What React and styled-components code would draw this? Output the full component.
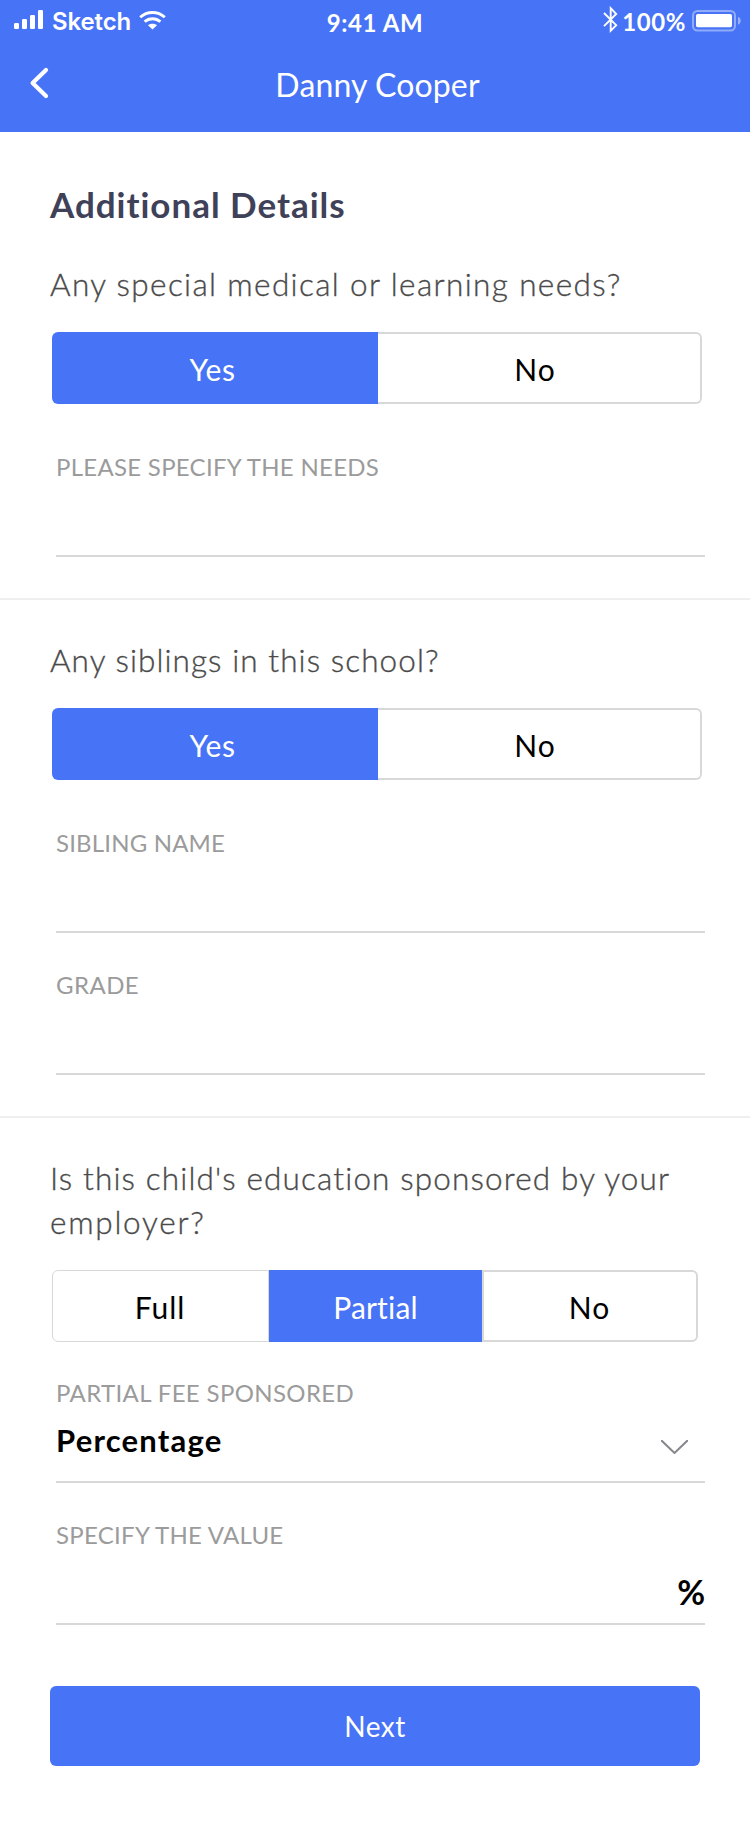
import React, { useState } from 'react';
import styled, { createGlobalStyle, ThemeProvider } from 'styled-components';

const theme = {
  blue: '#4773f7',
  heading: '#3f4159',
  question: '#4a4a4a',
  label: '#9b9b9b',
  line: '#d8d8d8',
  divider: '#efefef',
};

const GlobalStyle = createGlobalStyle`
  * { box-sizing: border-box; }
  body {
    margin: 0;
    background: #fff;
    font-family: Lato, "Open Sans", sans-serif;
    -webkit-font-smoothing: antialiased;
  }
`;

const Screen = styled.div`
  width: 750px;
  min-height: 1824px;
  display: flex;
  flex-direction: column;
  background: #fff;
`;

/* Header */
const Header = styled.header`
  height: 132px;
  background: ${({ theme }) => theme.blue};
  color: #fff;
`;

const StatusBar = styled.div`
  height: 40px;
  display: grid;
  grid-template-columns: 1fr auto 1fr;
`;

const StatusSide = styled.div`
  display: flex;
  align-items: flex-start;
  justify-content: ${({ $end }) => ($end ? 'flex-end' : 'flex-start')};
  padding: ${({ $end }) => ($end ? '0 9px 0 0' : '0 0 0 14px')};
`;

const StatusText = styled.span`
  font-size: 24px;
  line-height: 40px;
  font-weight: 700;
  letter-spacing: 0.6px;
  white-space: nowrap;
  margin-top: 3px;
`;

const Carrier = styled(StatusText)`
  font-family: Inter, sans-serif;
  font-weight: 600;
  letter-spacing: -0.13px;
  margin: 2px 8px 0 8px;
`;

const BatteryLevel = styled(StatusText)`
  letter-spacing: 0.6px;
  margin: 2px 6px 0 4px;
`;

const SignalIcon = styled.svg`
  width: 30px;
  height: 20px;
  margin-top: 10px;
`;

const WifiIcon = styled.svg`
  width: 27px;
  height: 19px;
  margin-top: 10.5px;
`;

const BluetoothIcon = styled.svg`
  width: 15px;
  height: 28px;
  margin-top: 6px;
`;

const BatteryIcon = styled.svg`
  width: 49px;
  height: 22px;
  margin-top: 10px;
`;

const NavBar = styled.div`
  height: 92px;
  display: grid;
  grid-template-columns: 1fr auto 1fr;
  align-items: start;
`;

const BackButton = styled.button`
  justify-self: start;
  border: 0;
  background: none;
  padding: 27px 0 0 28.5px;
  line-height: 0;
  color: inherit;
`;

const NavTitle = styled.h1`
  margin: 0;
  padding-left: 5px;
  font-size: 32px;
  line-height: 89px;
  font-weight: 400;
  letter-spacing: 0.12px;
`;

/* Form */
const Section = styled.section`
  padding: ${({ $first }) => ($first ? 50 : 38)}px 45px 41px 50px;
  border-bottom: ${({ $last }) => ($last ? 0 : 2)}px solid ${({ theme }) => theme.divider};
`;

const Heading = styled.h2`
  margin: 0 0 36px;
  font-size: 35px;
  line-height: 44px;
  font-weight: 700;
  letter-spacing: 0.98px;
  color: ${({ theme }) => theme.heading};
`;

const Question = styled.p`
  margin: 0 0 26px;
  font-size: 31.5px;
  line-height: 44px;
  font-weight: 300;
  letter-spacing: ${({ $tracking }) => $tracking}px;
  color: ${({ theme }) => theme.question};
  -webkit-text-stroke: 0.35px ${({ theme }) => theme.question};
`;

const Line = styled.span`
  display: block;
  white-space: nowrap;
  letter-spacing: ${({ $tracking }) => $tracking}px;
`;

const Segments = styled.div`
  display: flex;
  width: ${({ $width }) => $width}px;
  height: 72px;
  margin-left: 2px;
`;

const Segment = styled.button`
  flex: 0 0 ${({ $width }) => $width}px;
  padding: 2px ${({ $inset }) => $inset}px 0 0;
  display: flex;
  align-items: center;
  justify-content: center;
  font: 400 30px/36px Lato, sans-serif;
  letter-spacing: ${({ $tracking }) => $tracking}px;
  color: ${({ $active }) => ($active ? '#fff' : '#000')};
  background: ${({ $active, theme }) => ($active ? theme.blue : '#fff')};
  border: ${({ $active, $border }) => ($active ? 0 : $border)}px solid ${({ theme }) => theme.line};
  ${({ $joined }) => $joined && 'border-left-width: 0;'}
  &:first-child { border-radius: 6px 0 0 6px; }
  &:last-child { border-radius: 0 6px 6px 0; }
`;

const Field = styled.div`
  width: 649px;
  height: 105px;
  margin: ${({ $gap }) => $gap}px 0 0 6px;
  border-bottom: 2px solid ${({ theme }) => theme.line};
`;

const Label = styled.div`
  height: 30px;
  font-size: 24px;
  line-height: 30px;
  letter-spacing: ${({ $tracking }) => $tracking}px;
  white-space: nowrap;
  color: ${({ theme }) => theme.label};
`;

const SelectValue = styled.div`
  display: flex;
  justify-content: space-between;
  padding: 12px 17.5px 0 0;
  font-size: 31px;
  line-height: 40px;
  font-weight: 700;
  letter-spacing: 1.2px;
  color: #000;
`;

const SelectArrow = styled.svg`
  width: 27px;
  height: 14px;
  margin-top: 20px;
`;

const Unit = styled.div`
  padding-top: 22px;
  text-align: right;
  font-size: 34px;
  line-height: 40px;
  font-weight: 700;
  color: #000;
`;

const NextButton = styled.button`
  display: block;
  width: 650px;
  height: 80px;
  margin-top: 61px;
  padding: 0;
  border: 0;
  border-radius: 6px;
  background: ${({ theme }) => theme.blue};
  color: #fff;
  font: 400 28px/34px Lato, sans-serif;
  letter-spacing: 0.5px;
`;

const YES_NO = [
  { label: 'Yes', width: 326, tracking: 0.6, inset: 5 },
  { label: 'No', width: 324, tracking: 1, inset: 8, border: 2, joined: true },
];

const SPONSORSHIP = [
  { label: 'Full', width: 217, tracking: 0.9, inset: 1, border: 1 },
  { label: 'Partial', width: 213, tracking: 0.2, inset: 0 },
  { label: 'No', width: 216, tracking: 1, inset: 1, border: 2 },
];

function SegmentedControl({ options, initial, width }) {
  const [selected, setSelected] = useState(initial);
  return (
    <Segments $width={width}>
      {options.map((o) => (
        <Segment
          key={o.label}
          type="button"
          $width={o.width}
          $inset={o.inset}
          $tracking={o.tracking}
          $border={o.border ?? 2}
          $joined={o.joined}
          $active={o.label === selected}
          onClick={() => setSelected(o.label)}
        >
          {o.label}
        </Segment>
      ))}
    </Segments>
  );
}

export default function App() {
  return (
    <ThemeProvider theme={theme}>
      <GlobalStyle />
      <Screen>
        <Header>
          <StatusBar>
            <StatusSide>
              <SignalIcon viewBox="0 0 30 20" fill="#fff">
                <rect x="0" y="13" width="5" height="6" rx="1.2" />
                <rect x="8" y="9" width="5" height="10" rx="1.2" />
                <rect x="16" y="5" width="5" height="14" rx="1.2" />
                <rect x="24" y="0" width="5" height="19" rx="1.2" />
              </SignalIcon>
              <Carrier>Sketch</Carrier>
              <WifiIcon viewBox="0 0 27 19" fill="none" stroke="#fff" strokeWidth="2.9">
                <path d="M1.2 6.3C8.2-.1 18.8-.1 25.8 6.3" />
                <path d="M5.6 10.7C10.2 6.7 16.8 6.7 21.4 10.7" />
                <path d="M9 14.2C11.4 12.2 15.6 12.2 18 14.2L13.5 18.6Z" fill="#fff" stroke="none" />
              </WifiIcon>
            </StatusSide>
            <StatusText>9:41 AM</StatusText>
            <StatusSide $end>
              <BluetoothIcon viewBox="0 0 15 28" fill="none" stroke="#fff" strokeWidth="1.9">
                <path d="M1 7L13.2 19.2L7.7 24.8V2.2L13.2 8L1 20.2" />
              </BluetoothIcon>
              <BatteryLevel>100%</BatteryLevel>
              <BatteryIcon viewBox="0 0 49 22" fill="#fff">
                <rect x="1" y="1" width="42" height="19.5" rx="4.5" fill="none" stroke="#fff" strokeOpacity=".4" strokeWidth="2" />
                <rect x="4" y="4" width="36" height="13.3" rx="1.8" />
                <path d="M46 6.8C49.6 8 49.6 13.6 46 14.8Z" fillOpacity=".45" />
              </BatteryIcon>
            </StatusSide>
          </StatusBar>
          <NavBar>
            <BackButton type="button" aria-label="Back">
              <svg width="20" height="32" viewBox="0 0 20 32" fill="none" stroke="#fff" strokeWidth="4.2" strokeLinecap="round" strokeLinejoin="round">
                <path d="M17 3L3.6 16L17 29" />
              </svg>
            </BackButton>
            <NavTitle>Danny Cooper</NavTitle>
          </NavBar>
        </Header>

        <Section $first>
          <Heading>Additional Details</Heading>
          <Question $tracking={1.37}>Any special medical or learning needs?</Question>
          <SegmentedControl options={YES_NO} initial="Yes" width={650} />
          <Field $gap={48}>
            <Label $tracking={0.28}>PLEASE SPECIFY THE NEEDS</Label>
          </Field>
        </Section>

        <Section>
          <Question $tracking={1.08}>Any siblings in this school?</Question>
          <SegmentedControl options={YES_NO} initial="Yes" width={650} />
          <Field $gap={48}>
            <Label $tracking={0.17}>SIBLING NAME</Label>
          </Field>
          <Field $gap={37}>
            <Label $tracking={0.45}>GRADE</Label>
          </Field>
        </Section>

        <Section $last>
          <Question>
            <Line $tracking={1.15}>Is this child's education sponsored by your</Line>
            <Line $tracking={1.75}>employer?</Line>
          </Question>
          <SegmentedControl options={SPONSORSHIP} initial="Partial" width={646} />
          <Field $gap={36}>
            <Label $tracking={0.36}>PARTIAL FEE SPONSORED</Label>
            <SelectValue>
              Percentage
              <SelectArrow viewBox="0 0 27 14" fill="none" stroke="#85878d" strokeWidth="2">
                <path d="M0 0L13.5 13L27 0" />
              </SelectArrow>
            </SelectValue>
          </Field>
          <Field $gap={37}>
            <Label $tracking={0.28}>SPECIFY THE VALUE</Label>
            <Unit>%</Unit>
          </Field>
          <NextButton type="button">Next</NextButton>
        </Section>
      </Screen>
    </ThemeProvider>
  );
}
